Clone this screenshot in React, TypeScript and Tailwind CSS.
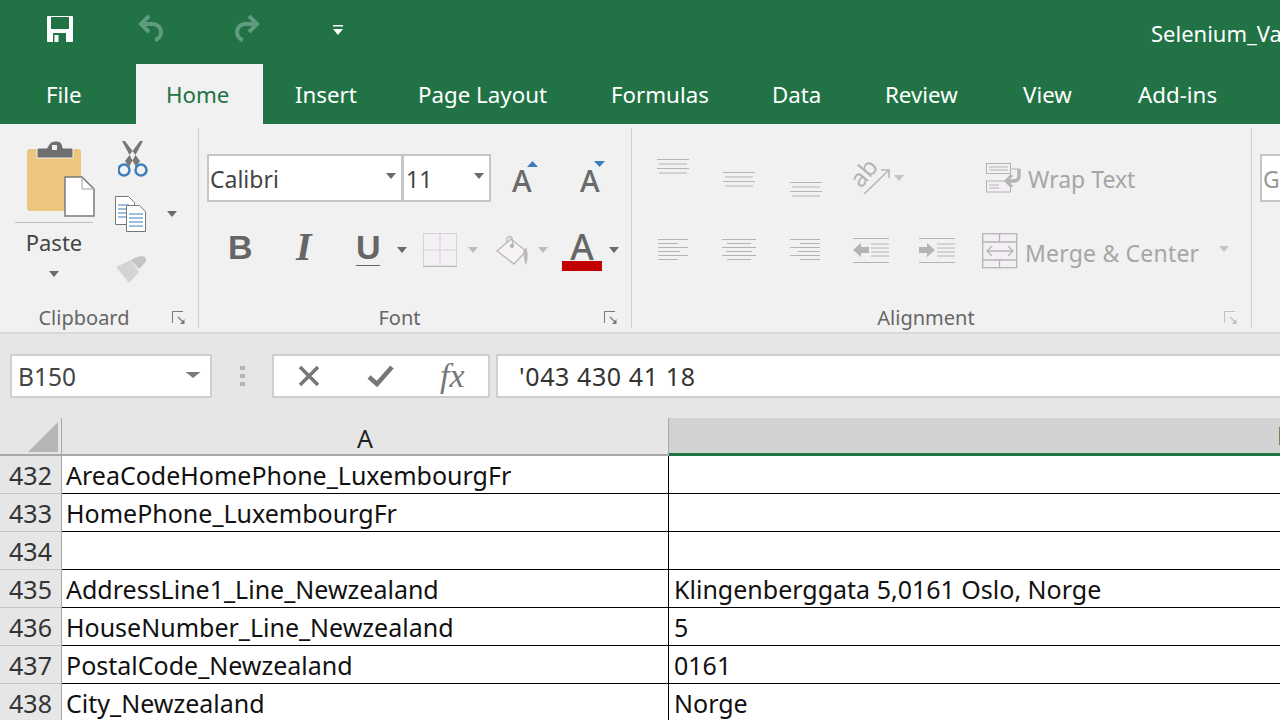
import React from 'react';

const Caret = ({ c = '#6a6a6a', className = '' }: { c?: string; className?: string }) => (
  <svg width="10" height="6" viewBox="0 0 10 6" className={className}><path d="M0 0h10L5 6z" fill={c} /></svg>
);

const Launcher = ({ c = '#7a7a7a' }: { c?: string }) => (
  <svg width="14" height="14" viewBox="0 0 14 14" fill="none" stroke={c}>
    <path d="M.5 12V.5H11" />
    <path d="M6 6l5 5" strokeWidth="1.2" />
    <path d="M12.5 8v5H8z" fill={c} stroke="none" />
  </svg>
);

const Lines = ({ w, rows, gap = 4 }: { w: number; rows: [number, number][]; gap?: number }) => (
  <svg width={w} height={rows.length * gap} viewBox={`0 0 ${w} ${rows.length * gap}`} className="block">
    {rows.map(([x, l], i) => <rect key={i} x={x} y={i * gap} width={l} height="1" fill="#b4b4b4" />)}
  </svg>
);

const vLines: [number, number][] = [[0, 32], [2, 28], [0, 32], [2, 28]];

const TABS = [
  { label: 'Insert', w: 'w-[123px]' },
  { label: 'Page Layout', w: 'w-[193px]' },
  { label: 'Formulas', w: 'w-[161px]' },
  { label: 'Data', w: 'w-[113px]' },
  { label: 'Review', w: 'w-[138px]' },
  { label: 'View', w: 'w-[115px]' },
  { label: 'Add-ins', w: 'w-[147px]' },
];

const ROWS = [
  { n: 432, a: 'AreaCodeHomePhone_LuxembourgFr', b: '' },
  { n: 433, a: 'HomePhone_LuxembourgFr', b: '' },
  { n: 434, a: '', b: '' },
  { n: 435, a: 'AddressLine1_Line_Newzealand', b: 'Klingenberggata 5,0161 Oslo, Norge' },
  { n: 436, a: 'HouseNumber_Line_Newzealand', b: '5' },
  { n: 437, a: 'PostalCode_Newzealand', b: '0161' },
  { n: 438, a: 'City_Newzealand', b: 'Norge' },
];

export default function App() {
  return (
    <div className="w-[1280px] h-[720px] overflow-hidden bg-white font-['Noto_Sans',sans-serif]">
      {/* Quick access + title */}
      <div className="h-16 bg-[#217346] flex items-start overflow-hidden">
        <svg width="26" height="26" viewBox="0 0 26 26" className="ml-[47px] mt-[16px] shrink-0">
          <path d="M0 1a1 1 0 0 1 1-1h24a1 1 0 0 1 1 1v24a1 1 0 0 1-1 1H1a1 1 0 0 1-1-1z" fill="#fff" />
          <rect x="4" y="1" width="18" height="12" fill="#217346" />
          <rect x="6" y="17" width="13" height="9" fill="#217346" />
          <rect x="7.500" y="19" width="4" height="7" fill="#fff" />
        </svg>
        <svg width="28" height="28" viewBox="0 0 28 28" fill="none" stroke="#5f9c7f" strokeWidth="4" className="ml-[65px] mt-[14px] shrink-0">
          <path d="M11 2L3 10l8 8" />
          <path d="M3 10h12a8 8 0 0 1 8 8 8 8 0 0 1-6 8" />
        </svg>
        <svg width="28" height="28" viewBox="0 0 28 28" fill="none" stroke="#5f9c7f" strokeWidth="4" className="ml-[66px] mt-[14px] shrink-0">
          <path d="M17 2l8 8-8 8" />
          <path d="M25 10H13a8 8 0 0 0-8 8 8 8 0 0 0 6 8" />
        </svg>
        <svg width="10" height="10" viewBox="0 0 10 10" className="ml-[73px] mt-[25px] shrink-0">
          <rect width="10" height="1.500" fill="#fff" />
          <path d="M0 4h10L5 10z" fill="#fff" />
        </svg>
        <div className="ml-[808px] mt-[18px] text-[22px] leading-[31px] text-white whitespace-nowrap">Selenium_Va</div>
      </div>

      {/* Tabs */}
      <div className="h-[60px] bg-[#217346] flex text-[22.3px] text-white">
        <div className="w-[136px] pl-[46px] pt-[14px]">File</div>
        <div className="w-[127px] pl-[30px] pt-[14px] bg-[#f1f1f1] text-[#217346]">Home</div>
        {TABS.map(t => (
          <div key={t.label} className={`${t.w} pl-[32px] pt-[14px] whitespace-nowrap`}>{t.label}</div>
        ))}
      </div>

      {/* Ribbon */}
      <div className="h-[210px] bg-[#f1f1f1] border-b-2 border-[#d9d9d9] flex text-[#666]">
        {/* Clipboard */}
        <div className="w-[199px] mt-[4px] h-[200px] border-r border-[#cfcfcf] flex flex-col">
          <div className="h-[179px] flex">
            <div className="w-[78px] ml-[15px] mt-[13px] flex flex-col items-center">
              <svg width="68" height="76" viewBox="0 0 68 76" className="ml-[12px] self-start">
                <rect x="0" y="8" width="54" height="62" rx="3" fill="#edc67d" />
                <path d="M10 17v-8q0-2 2-2h8q3-7 8-7h2q5 0 6 7h8q2 0 2 2v8z" fill="#6f6f6f" stroke="#f1f1f1" />
                <rect x="25" y="4" width="5" height="5" fill="#f1f1f1" />
                <path d="M38 36h17l12 12v27H38z" fill="#fff" stroke="#7a7a7a" strokeWidth="1.500" />
                <path d="M55 36v12h12" fill="none" stroke="#a0a0a0" />
              </svg>
              <div className="w-full h-[1px] bg-[#bdbdbd] mt-[5px]" />
              <div className="text-[22px] leading-[30px] text-[#444] mt-[4px]">Paste</div>
              <Caret className="mt-[14px]" />
            </div>
            <div className="flex flex-col ml-[22px] mt-[13px]">
              <svg width="32" height="37" viewBox="0 0 32 37" fill="none" className="ml-[3px]">
                <path d="M4 0h3l15 20-4 6zM25 0h-3L7 20l4 6z" fill="#777" />
                <circle cx="6" cy="29" r="5.500" stroke="#3e7fba" strokeWidth="2.500" />
                <circle cx="23" cy="29" r="5.500" stroke="#3e7fba" strokeWidth="2.500" />
              </svg>
              <div className="flex items-center mt-[18px]">
                <svg width="31" height="36" viewBox="0 0 31 36">
                  <path d="M.5.500h13l6 6v22H.5z" fill="#fff" stroke="#777" />
                  <path d="M3 9h11M3 13h11M3 17h11M3 21h11" stroke="#3e7fba" />
                  <path d="M11.500 9.500h13l6 6v20h-19z" fill="#fff" stroke="#777" />
                  <path d="M14 18h14M14 22h14M14 26h14M14 30h14" stroke="#3e7fba" />
                </svg>
                <Caret className="ml-[21px]" />
              </div>
              <svg width="34" height="30" viewBox="0 0 34 30" className="mt-[23px]">
                <path d="M1 12l15-7 8 12-10 11z" fill="#d6d3d6" />
                <path d="M16 5l6-3 5-1q5 1 4 5l-3 4-4 4z" fill="#c5c3c5" />
              </svg>
            </div>
          </div>
          <div className="flex items-start text-[20px] leading-[21px]">
            <div className="w-[168px] text-center">Clipboard</div>
            <div className="mt-[4px] ml-[4px]"><Launcher /></div>
          </div>
        </div>

        {/* Font */}
        <div className="w-[433px] mt-[4px] h-[200px] border-r border-[#cfcfcf] flex flex-col">
          <div className="h-[179px] flex flex-col">
            <div className="flex items-start mt-[26px] ml-[8px]">
              <div className="w-[196px] h-[48px] bg-white border-2 border-[#c6c6c6] flex items-center text-[23px] text-[#444] pl-[1px]">
                <span className="flex-1 pt-[2px]">Calibri</span>
                <Caret className="mr-[5px] -mt-[4px]" />
              </div>
              <div className="w-[89px] h-[48px] -ml-[1px] bg-white border-2 border-[#c6c6c6] flex items-center text-[23px] text-[#444] pl-[2px]">
                <span className="flex-1 pt-[2px]">11</span>
                <Caret className="mr-[5px] -mt-[4px]" />
              </div>
              <div className="relative ml-[21px] mt-[10px] text-[30px] leading-[34px] font-medium text-[#6a6a6a] w-[24px]">
                A
                <svg width="11" height="6" viewBox="0 0 11 6" className="absolute left-[15px] -top-[3px]"><path d="M0 6h11L5.500 0z" fill="#3e7fba" /></svg>
              </div>
              <div className="relative ml-[44px] mt-[10px] text-[30px] leading-[34px] font-medium text-[#6a6a6a] w-[24px]">
                A
                <svg width="11" height="6" viewBox="0 0 11 6" className="absolute left-[14px] -top-[3px]"><path d="M0 0h11L5.500 6z" fill="#3e7fba" /></svg>
              </div>
            </div>
            <div className="flex items-center h-[40px] mt-[28px] ml-[29px]">
              <div className="w-[24px] -mt-[6px] text-[34px] leading-[40px] font-bold text-[#666] font-['Liberation_Sans',sans-serif]">B</div>
              <div className="w-[24px] -mt-[6px] ml-[44px] text-[40px] leading-[40px] font-bold italic text-[#666] font-['Liberation_Serif',serif]">I</div>
              <div className="ml-[36px] -mt-[6px] w-[24px] text-[34px] leading-[36px] font-bold text-[#666] font-['Liberation_Sans',sans-serif] border-b border-[#666]">U</div>
              <Caret className="ml-[17px]" />
              <svg width="34" height="34" viewBox="0 0 34 34" fill="#f3eff4" stroke="#b9b9b9" strokeDasharray="1 1" className="ml-[16px]">
                <rect x=".5" y=".5" width="33" height="33" />
                <path d="M17 0v33M0 17h33" />
                <path d="M0 33.500h34" strokeDasharray="none" strokeWidth="1.500" />
              </svg>
              <Caret c="#bdbdbd" className="ml-[11px]" />
              <svg width="33" height="32" viewBox="0 0 33 32" fill="none" stroke="#b9b9b9" strokeWidth="1.300" className="ml-[18px]">
                <path d="M1 17L15 5l15 12-12 13z" fill="#f6f2f6" />
                <path d="M11 9V4q3-3 5 0l1 7" />
                <circle cx="16" cy="12" r="1.500" fill="#b9b9b9" />
                <path d="M30 15q2 6 0 14-2-5-2-12z" fill="#b9b9b9" />
              </svg>
              <Caret c="#bdbdbd" className="ml-[9px]" />
              <div className="relative ml-[14px] w-[40px] h-[40px] text-center text-[36px] leading-[34px] font-medium text-[#666]">
                A
                <div className="absolute left-0 top-[31px] w-[40px] h-[10px] bg-[#c00000]" />
              </div>
              <Caret className="ml-[7px]" />
            </div>
          </div>
          <div className="flex items-start text-[20px] leading-[21px]">
            <div className="w-[401px] text-center">Font</div>
            <div className="mt-[4px] ml-[4px]"><Launcher /></div>
          </div>
        </div>

        {/* Alignment */}
        <div className="w-[620px] mt-[4px] h-[200px] border-r border-[#cfcfcf] flex flex-col text-[#a6a6a6]">
          <div className="h-[179px] flex flex-col">
            <div className="flex items-start h-[70px] ml-[25px]">
              <div className="mt-[31px]"><Lines w={32} rows={vLines} gap={4.5} /></div>
              <div className="mt-[44px] ml-[34px]"><Lines w={32} rows={vLines} gap={4.5} /></div>
              <div className="mt-[54px] ml-[35px]"><Lines w={32} rows={vLines} gap={4.5} /></div>
              <svg width="38" height="34" viewBox="0 0 38 34" fill="none" stroke="#b4b4b4" strokeWidth="1.500" className="ml-[30px] mt-[33px] overflow-visible">
                <path d="M12 33L37 9M29 9h8v8" />
                <text x="9" y="28" fontSize="24" fill="#b4b4b4" stroke="none" transform="rotate(-50 9 28)" fontFamily="Noto Sans">ab</text>
              </svg>
              <Caret c="#c4c4c4" className="mt-[47px] ml-[4px]" />
              <svg width="36" height="30" viewBox="0 0 36 30" fill="none" stroke="#b4b4b4" className="ml-[82px] mt-[35px]">
                <rect x=".5" y=".5" width="24" height="10" fill="#f3eff4" />
                <rect x=".5" y="18" width="24" height="11" fill="#f3eff4" />
                <path d="M3 4h19M3 7h19M3 22h10M3 25h10" />
                <path d="M24 6h10" />
                <path d="M33 6v7q0 5-6 5h-7" strokeWidth="3.500" />
                <path d="M26 12l-6 6 6 6" strokeWidth="3" />
              </svg>
              <div className="ml-[6px] mt-[35px] text-[23px] leading-[32px] whitespace-nowrap">Wrap Text</div>
            </div>
            <div className="flex items-center h-[44px] mt-[31px] ml-[26px]">
              <Lines w={30} rows={[[0, 30], [0, 20], [0, 30], [0, 22], [0, 30], [0, 20]]} />
              <div className="ml-[34px]"><Lines w={34} rows={[[0, 34], [5, 24], [0, 34], [4, 26], [0, 34], [5, 24]]} /></div>
              <div className="ml-[34px]"><Lines w={30} rows={[[0, 30], [10, 20], [0, 30], [8, 22], [0, 30], [10, 20]]} /></div>
              <svg width="36" height="26" viewBox="0 0 36 26" className="ml-[33px]">
                <path d="M0 .5h36M18 6h18M18 10h18M18 14h18M18 18h18M0 24.500h36" stroke="#b4b4b4" />
                <path d="M0 12l8-7v4h8v6H8v4z" fill="#b4b4b4" />
              </svg>
              <svg width="36" height="26" viewBox="0 0 36 26" className="ml-[30px]">
                <path d="M0 .5h36M18 6h18M18 10h18M18 14h18M18 18h18M0 24.500h36" stroke="#b4b4b4" />
                <path d="M16 12L8 5v4H0v6h8v4z" fill="#b4b4b4" />
              </svg>
              <svg width="36" height="36" viewBox="0 0 36 36" fill="#f3eff4" stroke="#b4b4b4" strokeWidth="1.300" className="ml-[27px]">
                <rect x=".7" y=".7" width="34" height="34" />
                <path d="M.7 9h34M.7 27h34M17.500 .7V9M17.500 27v8" />
                <path d="M5 18h26M10 13l-5 5 5 5M26 13l5 5-5 5" fill="none" />
              </svg>
              <div className="ml-[7px] mt-[3px] w-[194px] text-[23px] tracking-[0.2px] leading-[32px] whitespace-nowrap">Merge &amp; Center</div>
              <Caret c="#c4c4c4" className="-mt-[4px]" />
            </div>
          </div>
          <div className="flex items-start text-[20px] leading-[21px] text-[#666]">
            <div className="w-[588px] text-center">Alignment</div>
            <div className="mt-[4px] ml-[4px]"><Launcher c="#c0c0c0" /></div>
          </div>
        </div>

        {/* Number (cut off) */}
        <div className="flex-1 pt-[30px] pl-[8px] overflow-hidden">
          <div className="h-[48px] bg-white border-2 border-r-0 border-[#c6c6c6] text-[23px] text-[#999] leading-[46px] pl-[1px]">G</div>
        </div>
      </div>

      {/* Formula bar */}
      <div className="h-[84px] bg-[#e6e6e6] flex items-start pt-[20px]">
        <div className="ml-[10px] w-[202px] h-[44px] bg-white border-2 border-[#cfcfcf] flex items-center pl-[6px] pr-[12px] text-[24.5px] text-[#444]">
          <span className="flex-1 pt-[2px]">B150</span>
          <Caret c="#7a7a7a" className="scale-x-150 -mt-[2px]" />
        </div>
        <div className="ml-[28px] w-[5px] mt-[12px] flex flex-col gap-[4px]">
          <div className="h-[4px] w-[5px] bg-[#b5b5b5]" />
          <div className="h-[4px] w-[5px] bg-[#b5b5b5]" />
          <div className="h-[4px] w-[5px] bg-[#b5b5b5]" />
        </div>
        <div className="ml-[27px] w-[218px] h-[44px] bg-white border-2 border-[#cfcfcf] flex items-center">
          <svg width="22" height="22" viewBox="0 0 22 22" className="ml-[24px]"><path d="M2 2l18 18M20 2L2 20" stroke="#777" strokeWidth="3.500" /></svg>
          <svg width="28" height="24" viewBox="0 0 28 24" className="ml-[47px]"><path d="M2 13l8 7L25 3" fill="none" stroke="#777" strokeWidth="4.500" /></svg>
          <div className="ml-[45px] text-[34px] leading-[34px] italic text-[#777] font-['Liberation_Serif',serif]">fx</div>
        </div>
        <div className="ml-[6px] flex-1 h-[44px] bg-white border-y-2 border-l-2 border-[#cfcfcf] pl-[21px] text-[25px] tracking-[0.6px] leading-[40px] text-[#333] whitespace-nowrap">'043 430 41 18</div>
      </div>

      {/* Column headers */}
      <div className="h-[38px] bg-[#e6e6e6] flex">
        <div className="w-[62px] border-r border-b-2 border-[#a9a9a9] flex items-end justify-end pb-[2px] pr-[3px]">
          <svg width="30" height="30" viewBox="0 0 30 30"><path d="M30 0v30H0z" fill="#b5b5b5" /></svg>
        </div>
        <div className="w-[607px] border-r border-b-2 border-[#a9a9a9] text-center text-[25px] leading-[40px] text-[#222]">A</div>
        <div className="flex-1 bg-[#d2d2d2] border-b-[3px] border-[#217346] flex justify-end items-center">
          <div className="w-[1px] h-[18px] bg-[#8a7a50]" />
        </div>
      </div>

      {/* Grid */}
      {ROWS.map(r => (
        <div key={r.n} className="h-[38px] flex text-[25px] leading-[38px] text-[#111]">
          <div className="w-[62px] bg-[#e6e6e6] border-r border-b border-r-[#a9a9a9] border-b-[#c4c4c4] text-center text-[#333]">{r.n}</div>
          <div className="w-[607px] border-r border-b border-black pl-[4px] whitespace-nowrap">{r.a}</div>
          <div className="flex-1 border-b border-black pl-[5px] whitespace-nowrap">{r.b}</div>
        </div>
      ))}
    </div>
  );
}
